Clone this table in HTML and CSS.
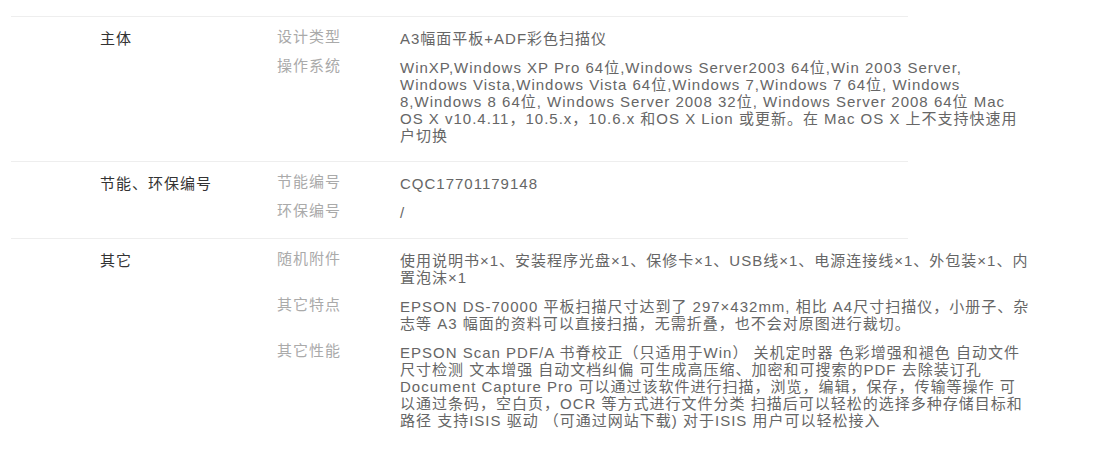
FILE: index.html
```html
<!DOCTYPE html>
<html lang="zh-CN">
<head>
    <meta charset="UTF-8">
    <title>参数</title>
    <link rel="stylesheet" href="styles.css">
</head>
<body>
    <div class="specs">
        <div class="group">
            <div class="group-name">主体</div>
            <div class="items">
                <div class="item">
                    <div class="item-name">设计类型</div>
                    <div class="item-value">A3幅面平板+ADF彩色扫描仪</div>
                </div>
                <div class="item">
                    <div class="item-name">操作系统</div>
                    <div class="item-value">WinXP,Windows XP Pro 64位,Windows Server2003 64位,Win 2003 Server, Windows Vista,Windows Vista 64位,Windows 7,Windows 7 64位, Windows 8,Windows 8 64位, Windows Server 2008 32位, Windows Server 2008 64位 Mac OS X v10.4.11，10.5.x，10.6.x 和OS X Lion 或更新。在 Mac OS X 上不支持快速用户切换</div>
                </div>
            </div>
        </div>

        <div class="group">
            <div class="group-name">节能、环保编号</div>
            <div class="items">
                <div class="item">
                    <div class="item-name">节能编号</div>
                    <div class="item-value">CQC17701179148</div>
                </div>
                <div class="item">
                    <div class="item-name">环保编号</div>
                    <div class="item-value">/</div>
                </div>
            </div>
        </div>

        <div class="group">
            <div class="group-name">其它</div>
            <div class="items">
                <div class="item">
                    <div class="item-name">随机附件</div>
                    <div class="item-value">使用说明书×1、安装程序光盘×1、保修卡×1、USB线×1、电源连接线×1、外包装×1、内置泡沫×1</div>
                </div>
                <div class="item">
                    <div class="item-name">其它特点</div>
                    <div class="item-value">EPSON DS-70000 平板扫描尺寸达到了 297×432mm, 相比 A4尺寸扫描仪，小册子、杂志等 A3 幅面的资料可以直接扫描，无需折叠，也不会对原图进行裁切。</div>
                </div>
                <div class="item">
                    <div class="item-name">其它性能</div>
                    <div class="item-value">EPSON Scan PDF/A 书脊校正（只适用于Win） 关机定时器 色彩增强和褪色 自动文件尺寸检测 文本增强 自动文档纠偏 可生成高压缩、加密和可搜索的PDF 去除装订孔 Document Capture Pro 可以通过该软件进行扫描，浏览，编辑，保存，传输等操作 可以通过条码，空白页，OCR 等方式进行文件分类 扫描后可以轻松的选择多种存储目标和路径 支持ISIS 驱动 （可通过网站下载) 对于ISIS 用户可以轻松接入</div>
                </div>
            </div>
        </div>
    </div>
</body>
</html>
```

FILE: styles.css
```css
body {
    margin: 0;
    padding: 16px 0 0 11px;
    font-family: "Liberation Sans", Arial, "Noto Sans CJK SC", sans-serif;
    font-size: 15px;
    line-height: 17px;
    letter-spacing: 1px;
    color: #666;
    background: #fff;
}

.specs {
    width: 897px;
}

.group {
    display: flex;
    border-top: 1px solid #eee;
    padding: 11px 0 7px 89px;
}

.group-name {
    flex: 0 0 177px;
    color: #333;
    padding-top: 2px;
}

.items {
    display: flex;
    flex-direction: column;
    flex-shrink: 0;
}

.item {
    display: flex;
    padding-bottom: 10px;
}

.item-name {
    flex: 0 0 123px;
    color: #aaa;
}

.item-value {
    width: 630px;
    padding-top: 2px;
}
```
